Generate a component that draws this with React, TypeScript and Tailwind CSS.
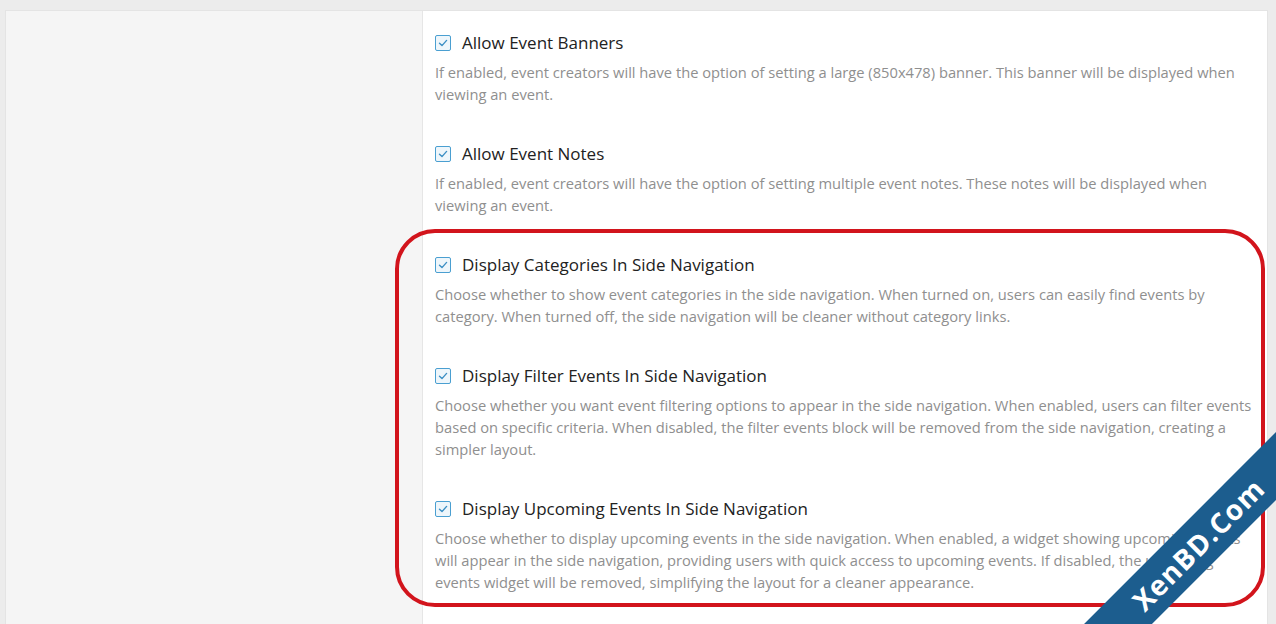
const options = [
  {
    title: 'Allow Event Banners',
    lines: [
      'If enabled, event creators will have the option of setting a large (850x478) banner. This banner will be displayed when',
      'viewing an event.',
    ],
  },
  {
    title: 'Allow Event Notes',
    lines: [
      'If enabled, event creators will have the option of setting multiple event notes. These notes will be displayed when',
      'viewing an event.',
    ],
  },
  {
    title: 'Display Categories In Side Navigation',
    lines: [
      'Choose whether to show event categories in the side navigation. When turned on, users can easily find events by',
      'category. When turned off, the side navigation will be cleaner without category links.',
    ],
  },
  {
    title: 'Display Filter Events In Side Navigation',
    lines: [
      'Choose whether you want event filtering options to appear in the side navigation. When enabled, users can filter events',
      'based on specific criteria. When disabled, the filter events block will be removed from the side navigation, creating a',
      'simpler layout.',
    ],
  },
  {
    title: 'Display Upcoming Events In Side Navigation',
    lines: [
      'Choose whether to display upcoming events in the side navigation. When enabled, a widget showing upcoming events',
      'will appear in the side navigation, providing users with quick access to upcoming events. If disabled, the upcoming',
      'events widget will be removed, simplifying the layout for a cleaner appearance.',
    ],
  },
];

function Checkbox() {
  return (
    <span className="flex h-4 w-4 shrink-0 items-center justify-center rounded-[2px] border border-[#4a9fd1] bg-[#eef6fb]">
      <svg viewBox="0 0 12 12" className="h-3 w-3" fill="none">
        <path d="M2.5 6.2 L5 8.6 L9.6 3.4" stroke="#3b8fc4" strokeWidth="1.4" strokeLinecap="round" strokeLinejoin="round" />
      </svg>
    </span>
  );
}

function OptionRow({ title, lines }: { title: string; lines: string[] }) {
  return (
    <div className="pb-9">
      <label className="flex h-6 items-center gap-[11px]">
        <Checkbox />
        <span className="text-[17px] leading-6 text-[#222]">{title}</span>
      </label>
      <p className="mt-[6px] mb-[1px] text-[14.7px] leading-[22px] text-[#8f8f8f]">
        {lines.map((line) => (
          <span key={line} className="block whitespace-nowrap">
            {line}
          </span>
        ))}
      </p>
    </div>
  );
}

export default function App() {
  return (
    <div
      className="relative h-[624px] w-[1276px] overflow-hidden bg-[#ececec] pt-[10px] pl-[5px] pr-[8px]"
      style={{ fontFamily: '"Open Sans", "Noto Sans", sans-serif' }}
    >
      <div className="flex h-[640px] border border-[#e4e4e4] bg-white">
        <div className="w-[417px] shrink-0 border-r border-[#e6e6e6] bg-[#f5f5f5]" />
        <div className="flex-1 pt-[20px] pl-[12px]">
          {options.map((o) => (
            <OptionRow key={o.title} title={o.title} lines={o.lines} />
          ))}
        </div>
      </div>

      <div className="pointer-events-none absolute top-[229px] left-[395px] h-[378px] w-[870px] rounded-[40px] border-4 border-[#d2141c]" />

      <div className="pointer-events-none absolute top-[520px] left-[998px] flex h-[48px] w-[400px] -rotate-45 items-center justify-center bg-[#1c5d8e]">
        <span className="text-[28px] font-bold tracking-[1px] text-white" style={{ fontFamily: '"Open Sans", sans-serif' }}>
          XenBD.Com
        </span>
      </div>
    </div>
  );
}
